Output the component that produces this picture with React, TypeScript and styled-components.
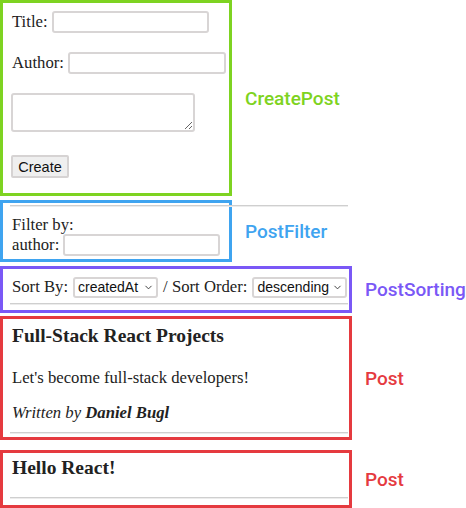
import styled, { createGlobalStyle } from "styled-components";
import React from "react";
import { ChevronDown } from "lucide-react";

const GlobalStyle = createGlobalStyle`
  body {
    margin: 0;
    background: #ffffff;
    font-family: "Liberation Serif", "Times New Roman", serif;
    font-size: 16.7px;
    color: #222222;
  }
`;

const Page = styled.div`
  display: flex;
  flex-direction: column;
  width: 466px;
  height: 508px;
  overflow: hidden;
`;

const Row = styled.div<{ $after: number }>`
  display: flex;
  align-items: center;
  gap: 13px;
  margin-bottom: ${(p) => p.$after}px;
`;

const Frame = styled.div<{ $color: string; $wide?: boolean; $height: number; $top: number; $gap: number }>`
  box-sizing: border-box;
  width: ${(p) => (p.$wide ? 352 : 232)}px;
  height: ${(p) => p.$height}px;
  padding-top: ${(p) => p.$top}px;
  border: 3px solid ${(p) => p.$color};
  display: flex;
  flex-direction: column;
  align-items: flex-start;
  gap: ${(p) => p.$gap}px;
`;

const Label = styled.div<{ $color: string }>`
  font-family: Roboto, "Noto Sans", sans-serif;
  font-weight: 500;
  font-size: 19px;
  color: ${(p) => p.$color};
`;

const Field = styled.label<{ $gap?: number }>`
  display: flex;
  align-items: center;
  gap: ${(p) => p.$gap ?? 4}px;
  padding-left: 9px;
  height: 22px;
  white-space: nowrap;
`;

const TextInput = styled.input<{ $width: number }>`
  box-sizing: border-box;
  width: ${(p) => p.$width}px;
  height: 22px;
  border: 2px solid #d8d5d5;
  border-radius: 3px;
  background: #fff;
  margin: 0;
`;

const TextArea = styled.textarea`
  box-sizing: border-box;
  width: 184px;
  height: 39px;
  margin: 0 0 0 8px;
  border: 2px solid #d8d5d5;
  border-radius: 3px;
`;

const Button = styled.button`
  box-sizing: border-box;
  width: 58px;
  height: 23px;
  margin: 4px 0 0 8px;
  padding: 0;
  font-family: "Liberation Sans", Arial, sans-serif;
  font-size: 14.5px;
  color: #111;
  background: #efefef;
  border: 2px solid #d6d3d3;
  border-radius: 2px;
`;

const Rule = styled.hr<{ $top?: number }>`
  box-sizing: border-box;
  width: 338px;
  flex-shrink: 0;
  height: 0;
  margin: ${(p) => p.$top ?? 0}px 0 0 7px;
  border: 0;
  border-top: 1px solid #cfcfcf;
  border-bottom: 1px solid #ececec;
`;

const Text = styled.div<{ $top?: number }>`
  padding-left: 9px;
  line-height: 19px;
  margin-top: ${(p) => p.$top ?? 0}px;
`;

const FilterBody = styled.div`
  margin-top: 8px;
`;

const SelectWrap = styled.span`
  position: relative;
  display: inline-flex;
`;

const Select = styled.select<{ $width: number }>`
  appearance: none;
  box-sizing: border-box;
  width: ${(p) => p.$width}px;
  height: 21px;
  margin: 0;
  padding: 0 0 0 3px;
  font-family: "Liberation Sans", Arial, sans-serif;
  font-size: 14px;
  color: #111;
  background: #fff;
  border: 2px solid #d8d5d5;
  border-radius: 3px;
`;

const Chevron = styled(ChevronDown)`
  position: absolute;
  right: 4px;
  top: 5px;
  pointer-events: none;
  color: #333;
`;

const Title = styled.h3<{ $top: number }>`
  margin: ${(p) => p.$top}px 0 0;
  padding-left: 9px;
  font-size: 19.5px;
  font-weight: bold;
  line-height: 22px;
`;

const Byline = styled.em`
  display: block;
  padding-left: 9px;
  line-height: 19px;
  margin-top: 16px;
`;

const SortSelect: React.FC<{ width: number; value: string }> = ({ width, value }) => (
  <SelectWrap>
    <Select $width={width}>
      <option>{value}</option>
    </Select>
    <Chevron size={11} strokeWidth={2} />
  </SelectWrap>
);

const App: React.FC = () => {
  return (
    <Page>
      <GlobalStyle />
      <Row $after={4}>
        <Frame $color="#7ed321" $height={196} $top={8} $gap={19}>
          <Field>
            Title: <TextInput $width={157} />
          </Field>
          <Field>
            Author: <TextInput $width={158} />
          </Field>
          <TextArea />
          <Button>Create</Button>
        </Frame>
        <Label $color="#7ed321">CreatePost</Label>
      </Row>

      <Row $after={4}>
        <Frame $color="#3fa4f0" $height={62} $top={2} $gap={0}>
          <Rule />
          <FilterBody>
            <Text>Filter by:</Text>
            <Field>
              author: <TextInput $width={157} />
            </Field>
          </FilterBody>
        </Frame>
        <Label $color="#3fa4f0">PostFilter</Label>
      </Row>

      <Row $after={3}>
        <Frame $color="#7a58f6" $wide $height={47} $top={7} $gap={5}>
          <Field $gap={5}>
            Sort By:
            <SortSelect width={85} value="createdAt" />
            / Sort Order:
            <SortSelect width={95} value="descending" />
          </Field>
          <Rule />
        </Frame>
        <Label $color="#7a58f6">PostSorting</Label>
      </Row>

      <Row $after={10}>
        <Frame $color="#e53a3f" $wide $height={124} $top={0} $gap={0}>
          <Title $top={6}>Full-Stack React Projects</Title>
          <Text $top={21}>Let's become full-stack developers!</Text>
          <Byline>
            Written by <b>Daniel Bugl</b>
          </Byline>
          <Rule $top={10} />
        </Frame>
        <Label $color="#e53a3f">Post</Label>
      </Row>

      <Row $after={0}>
        <Frame $color="#e53a3f" $wide $height={58} $top={0} $gap={0}>
          <Title $top={4}>Hello React!</Title>
          <Rule $top={18} />
        </Frame>
        <Label $color="#e53a3f">Post</Label>
      </Row>
    </Page>
  );
};

export default App;
